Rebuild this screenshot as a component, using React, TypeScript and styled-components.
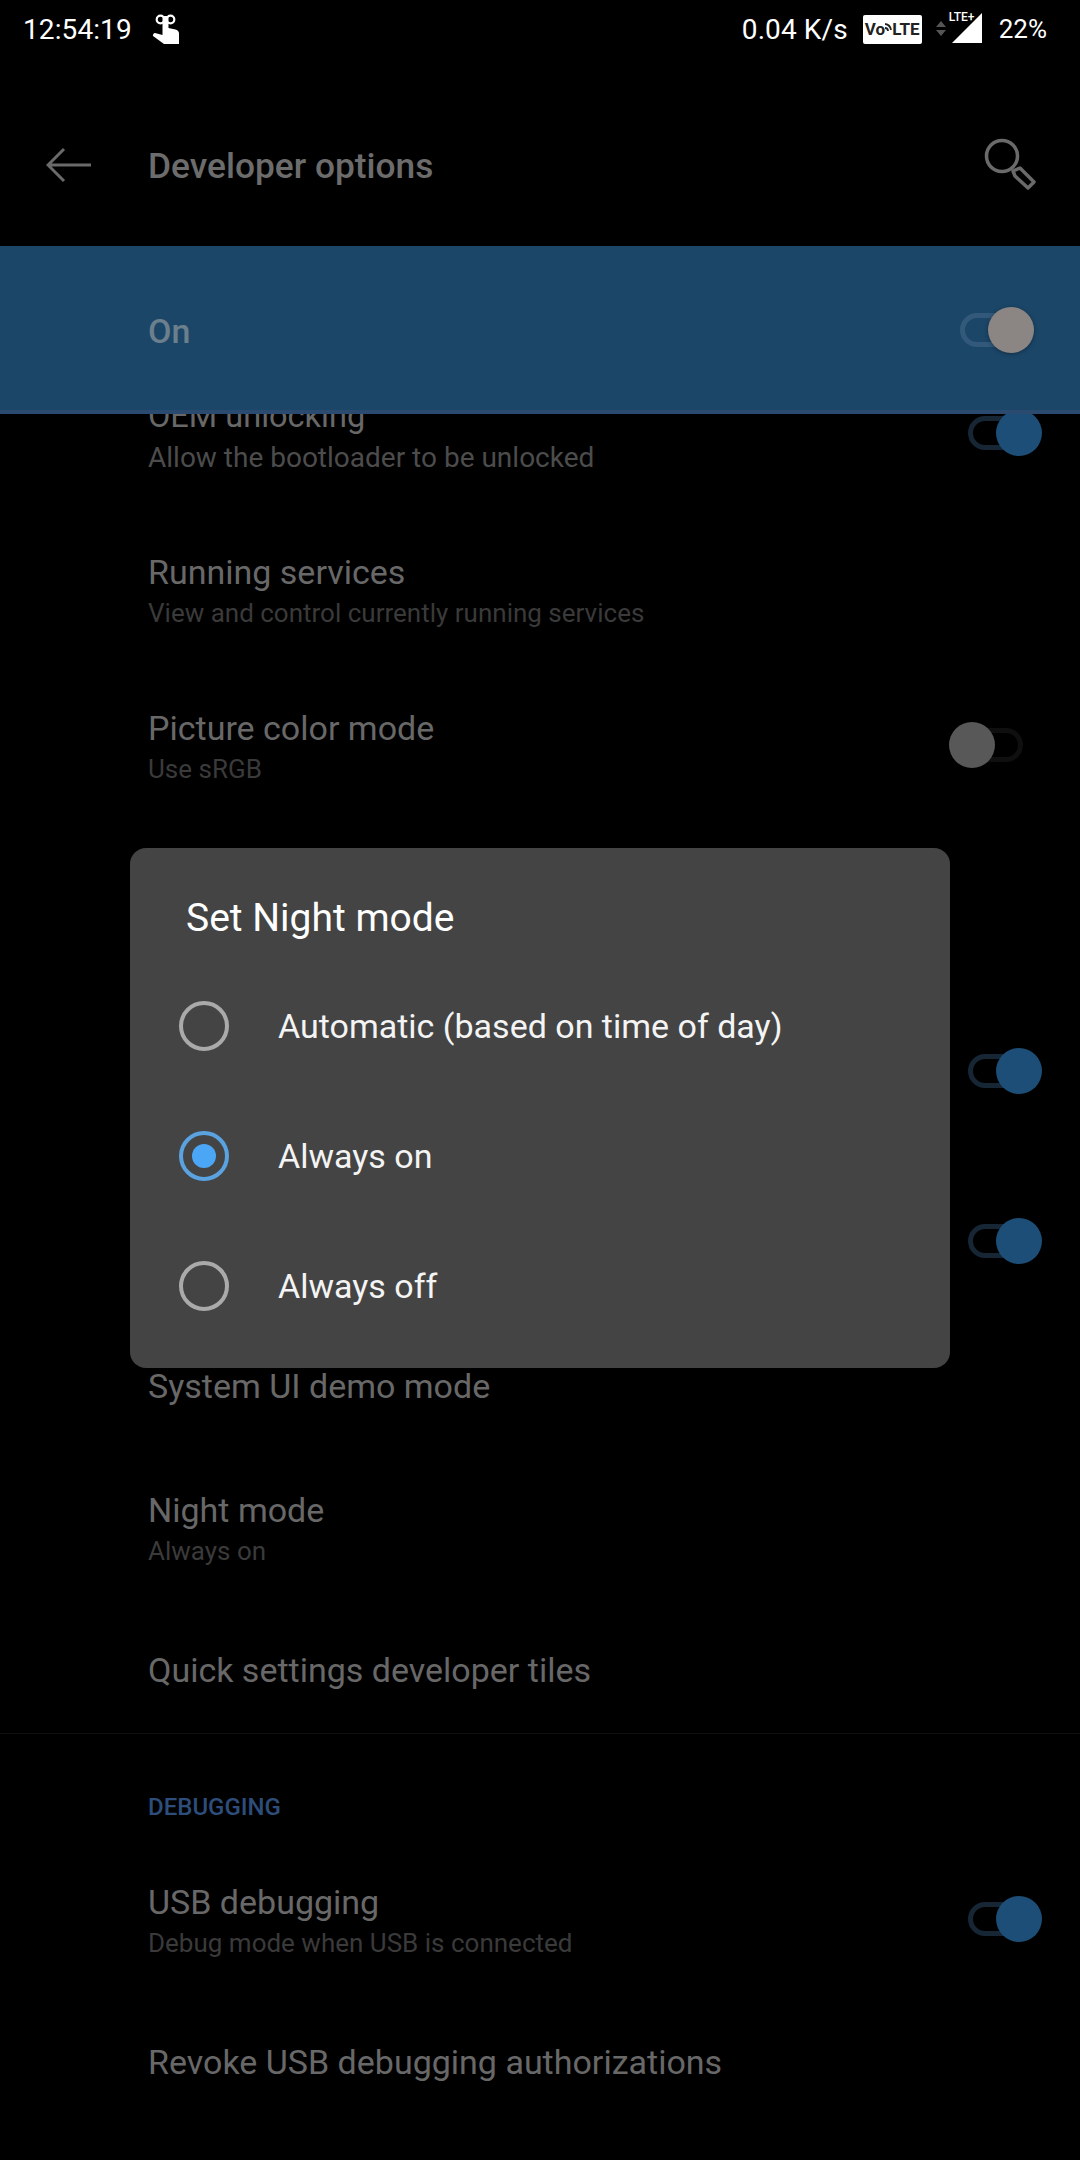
import React from "react";
import styled, { createGlobalStyle } from "styled-components";

const Global = createGlobalStyle`
  html, body { margin: 0; padding: 0; background: #000; }
  * { box-sizing: border-box; }
`;

const Screen = styled.div`
  position: relative;
  width: 1080px;
  height: 2160px;
  background: #000;
  overflow: hidden;
  display: flex;
  flex-direction: column;
  font-family: Roboto, "Liberation Sans", sans-serif;
`;

const StatusBar = styled.div`
  height: 60px;
  flex: none;
  display: flex;
  align-items: center;
  padding: 0 33px 2px 23px;
  color: #fff;
  font-size: 28px;
  letter-spacing: 0.1px;
`;

const StatusLeft = styled.div`
  display: flex;
  align-items: center;
  gap: 20px;
  flex: 1;
`;

const StatusRight = styled.div`
  display: flex;
  align-items: center;
`;

const BatteryText = styled.span`
  font-size: 26px;
  letter-spacing: 0;
`;

const VoLteBadge = styled.div`
  width: 59px;
  height: 29px;
  margin-left: 15px;
  background: #fff;
  border-radius: 2px;
  color: #222;
  font-size: 17px;
  font-weight: 700;
  letter-spacing: 0;
  display: flex;
  align-items: center;
  justify-content: center;
`;

const SignalWrap = styled.div`
  position: relative;
  width: 48px;
  height: 32px;
  margin: 0 17px 0 12px;
`;

const LteLabel = styled.span`
  position: absolute;
  left: 15px;
  top: -3px;
  font-size: 12px;
  font-weight: 500;
  letter-spacing: 0;
  color: #fff;
`;

const Toolbar = styled.div`
  height: 186px;
  flex: none;
  display: flex;
  align-items: center;
  padding: 48px 40px 24px 46px;
`;

const ToolbarTitle = styled.div`
  flex: 1;
  margin-left: 56px;
  padding-top: 2px;
  font-size: 35.300px;
  font-weight: 500;
  color: #6c6c6c;
`;

const MasterBar = styled.div`
  height: 168px;
  flex: none;
  position: relative;
  z-index: 1;
  background: #1b4668;
  border-bottom: 4px solid #2a4a70;
  display: flex;
  align-items: center;
  justify-content: space-between;
  padding: 3px 60px 0 148px;
`;

const MasterLabel = styled.div`
  padding-top: 3px;
  font-size: 34px;
  font-weight: 500;
  color: #6b7f8c;
`;

const ListClip = styled.div`
  flex: 1;
  min-height: 0;
  overflow: hidden;
`;

const List = styled.div`
  margin-top: -56px;
`;

const Row = styled.div<{ $h: number }>`
  height: ${(p) => p.$h}px;
  display: flex;
  align-items: center;
  justify-content: space-between;
  padding: 0 52px 0 148px;
`;

const RowText = styled.div`
  display: flex;
  flex-direction: column;
  padding-top: 1px;
`;

const RowTitle = styled.div<{ $small?: boolean }>`
  font-size: ${(p) => (p.$small ? 32.5 : 34)}px;
  line-height: 41px;
  color: #686868;
`;

const RowSub = styled.div<{ $strong?: boolean }>`
  font-size: ${(p) => (p.$strong ? 28 : 26)}px;
  line-height: 41px;
  color: ${(p) => (p.$strong ? "#4c4c4c" : "#3a3a3a")};
`;

const Divider = styled.div`
  height: 1px;
  background: #101010;
`;

const SectionHeader = styled.div`
  height: 110px;
  padding: 60px 0 0 148px;
  font-size: 24px;
  font-weight: 500;
  line-height: 26px;
  color: #2d4d7a;
`;

const Switch = styled.div<{ $on: boolean; $band?: boolean; $raised?: boolean }>`
  position: relative;
  width: 58px;
  height: 34px;
  border-radius: 17px;
  border: 5px solid ${(p) => (p.$band ? "#32597a" : p.$on ? "#172634" : "#0f0f0f")};
  margin-right: ${(p) => (p.$on ? 2 : 5)}px;
  margin-bottom: ${(p) => (p.$raised ? 6 : 0)}px;
`;

const Thumb = styled.div<{ $on: boolean; $band?: boolean }>`
  position: absolute;
  top: -11px;
  width: 46px;
  height: 46px;
  border-radius: 50%;
  ${(p) => (p.$on ? "right: -21px;" : "left: -21px;")}
  background: ${(p) => (p.$band ? "#8b8683" : p.$on ? "#1c4e78" : "#585858")};
  ${(p) => (p.$band ? "box-shadow: 0 1px 4px rgba(0,0,0,0.35);" : "")}
`;

const Dialog = styled.div`
  position: absolute;
  left: 130px;
  top: 848px;
  width: 820px;
  height: 520px;
  z-index: 2;
  border-radius: 16px;
  background: #444444;
  padding: 44px 0 0 49px;
  color: #fff;
`;

const DialogTitle = styled.div`
  margin-left: 7px;
  font-size: 39px;
  line-height: 52px;
  height: 69px;
`;

const Option = styled.div`
  height: 130px;
  display: flex;
  align-items: center;
  gap: 49px;
  font-size: 34px;
  color: #f4f4f4;
`;

const Radio = styled.div<{ $on?: boolean }>`
  width: 50px;
  height: 50px;
  flex: none;
  border-radius: 50%;
  border: 4px solid ${(p) => (p.$on ? "#5aa2e0" : "#aaaaaa")};
  display: flex;
  align-items: center;
  justify-content: center;
`;

const RadioDot = styled.div`
  width: 24px;
  height: 24px;
  border-radius: 50%;
  background: #4ba6f5;
`;

const Toggle = ({ on, band, raised }: { on: boolean; band?: boolean; raised?: boolean }) => (
  <Switch $on={on} $band={band} $raised={raised}>
    <Thumb $on={on} $band={band} />
  </Switch>
);

const TouchIcon = () => (
  <svg width="30" height="34" viewBox="0 0 30 34">
    <circle cx="8.500" cy="7.500" r="3.800" fill="none" stroke="#fff" strokeWidth="2.200" />
    <circle cx="18.500" cy="7.500" r="3.800" fill="none" stroke="#fff" strokeWidth="2.200" />
    <path
      fill="#fff"
      d="M10.500 4h6v12l7 1.500c2 .5 3.500 2 3.500 4V32H12L1 24c-.5-1 .5-3 2-3l7.500 2z"
    />
  </svg>
);

const WifiArcs = () => (
  <svg width="7" height="17" viewBox="0 0 7 17">
    <path d="M0 7a3 3 0 0 1 3 3M0 3a7 7 0 0 1 6 6" fill="none" stroke="#222" strokeWidth="1.800" />
  </svg>
);

const SignalIcon = () => (
  <svg width="48" height="32" viewBox="0 0 48 32">
    <path d="M2 14l5-6 5 6zM2 17l5 6 5-6z" fill="#555" />
    <path d="M48 0v30H18z" fill="#fff" />
  </svg>
);

const BackIcon = () => (
  <svg width="46" height="36" viewBox="0 0 46 36">
    <path d="M45 18H2M18 2L2 18l16 16" fill="none" stroke="#6a6a6a" strokeWidth="3" />
  </svg>
);

const SearchIcon = () => (
  <svg width="56" height="58" viewBox="0 0 56 58">
    <circle cx="18" cy="20" r="15.500" fill="none" stroke="#6a6a6a" strokeWidth="3.500" />
    <path
      d="M29 35l7-3 14 14-6 6-13-12z"
      fill="none"
      stroke="#6a6a6a"
      strokeWidth="3.500"
      strokeLinejoin="round"
    />
  </svg>
);

export default function App() {
  return (
    <Screen>
      <Global />
      <StatusBar>
        <StatusLeft>
          <span>12:54:19</span>
          <TouchIcon />
        </StatusLeft>
        <StatusRight>
          <span>0.04 K/s</span>
          <VoLteBadge>
            <span>Vo</span>
            <WifiArcs />
            <span>LTE</span>
          </VoLteBadge>
          <SignalWrap>
            <SignalIcon />
            <LteLabel>LTE+</LteLabel>
          </SignalWrap>
          <BatteryText>22%</BatteryText>
        </StatusRight>
      </StatusBar>
      <Toolbar>
        <BackIcon />
        <ToolbarTitle>Developer options</ToolbarTitle>
        <SearchIcon />
      </Toolbar>
      <MasterBar>
        <MasterLabel>On</MasterLabel>
        <Toggle on band />
      </MasterBar>
      <ListClip>
        <List>
          <Row $h={156}>
            <RowText>
              <RowTitle $small>OEM unlocking</RowTitle>
              <RowSub $strong>Allow the bootloader to be unlocked</RowSub>
            </RowText>
            <Toggle on raised />
          </Row>
          <Row $h={156}>
            <RowText>
              <RowTitle>Running services</RowTitle>
              <RowSub>View and control currently running services</RowSub>
            </RowText>
          </Row>
          <Row $h={156}>
            <RowText>
              <RowTitle>Picture color mode</RowTitle>
              <RowSub>Use sRGB</RowSub>
            </RowText>
            <Toggle on={false} raised />
          </Row>
          <Row $h={154} />
          <Row $h={182}>
            <span />
            <Toggle on />
          </Row>
          <Row $h={158}>
            <span />
            <Toggle on />
          </Row>
          <Row $h={132}>
            <RowTitle>System UI demo mode</RowTitle>
          </Row>
          <Row $h={156}>
            <RowText>
              <RowTitle>Night mode</RowTitle>
              <RowSub>Always on</RowSub>
            </RowText>
          </Row>
          <Row $h={125}>
            <RowTitle>Quick settings developer tiles</RowTitle>
          </Row>
          <Divider />
          <SectionHeader>DEBUGGING</SectionHeader>
          <Row $h={156}>
            <RowText>
              <RowTitle>USB debugging</RowTitle>
              <RowSub>Debug mode when USB is connected</RowSub>
            </RowText>
            <Toggle on raised />
          </Row>
          <Row $h={124}>
            <RowTitle>Revoke USB debugging authorizations</RowTitle>
          </Row>
        </List>
      </ListClip>
      <Dialog>
        <DialogTitle>Set Night mode</DialogTitle>
        <Option>
          <Radio />
          Automatic (based on time of day)
        </Option>
        <Option>
          <Radio $on>
            <RadioDot />
          </Radio>
          Always on
        </Option>
        <Option>
          <Radio />
          Always off
        </Option>
      </Dialog>
    </Screen>
  );
}
